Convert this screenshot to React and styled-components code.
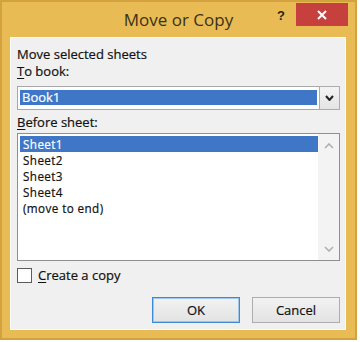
import React from 'react';
import styled, { createGlobalStyle } from 'styled-components';

const Global = createGlobalStyle`
  html, body { margin: 0; padding: 0; background: #ffffff; }
  body { font-family: "Open Sans", "Noto Sans", sans-serif; color: #111; }
`;

const Window = styled.div`
  box-sizing: border-box;
  width: 357px;
  height: 340px;
  background: #e9bb55;
  border: 2px solid #d3a13d;
  display: flex;
  flex-direction: column;
`;

const TitleBar = styled.div`
  height: 35px;
  flex: none;
  display: grid;
  grid-template-columns: 1fr auto 1fr;
  align-items: start;
`;

const Title = styled.div`
  grid-column: 2;
  font-size: 17px;
  line-height: 18px;
  color: #3a3216;
  padding-top: 9px;
`;

const Controls = styled.div`
  grid-column: 3;
  justify-self: end;
  display: flex;
  align-items: flex-start;
  gap: 11px;
  margin-right: 7px;
`;

const Help = styled.span`
  font-family: "Liberation Sans", Arial, sans-serif;
  font-weight: 700;
  font-size: 13px;
  line-height: 13px;
  color: #2a2410;
  margin-top: 7px;
`;

const CloseButton = styled.div`
  width: 52px;
  height: 23px;
  margin-top: 1px;
  background: #c6403e;
  display: flex;
  align-items: center;
  justify-content: center;
`;

const Panel = styled.div`
  flex: 1;
  margin: 0 9px 8px 8px;
  background: #f0f0f0;
  border: 1px solid #fbfbfb;
  padding: 8px 5px 0 6px;
  display: flex;
  flex-direction: column;
  font-size: 13px;
  line-height: 17px;
  -webkit-text-stroke: 0.2px currentColor;
`;

const Label = styled.div`
  margin-top: ${(p) => p.$mt || 0}px;
  color: #111;
`;

const Key = styled.span`
  text-decoration: underline;
  text-underline-offset: 2px;
`;

const Combo = styled.div`
  margin-top: 6px;
  height: 24px;
  box-sizing: border-box;
  border: 1px solid #a8a8a8;
  background: #fff;
  display: grid;
  grid-template-columns: 1fr 20px;
  column-gap: 2px;
`;

const ComboValue = styled.div`
  margin: 3px 0 4px 2px;
  background: #3f76c6;
  color: #fff;
  padding-left: 2px;
  font-size: 13px;
  line-height: 15px;
`;

const ComboButton = styled.div`
  margin: -1px -1px -1px 0;
  border: 1px solid #acacac;
  background: linear-gradient(#f4f4f4, #e4e4e4);
  display: flex;
  align-items: center;
  justify-content: center;
`;

const ListBox = styled.div`
  margin-top: 2px;
  height: 128px;
  box-sizing: border-box;
  border: 1px solid #8f8f8f;
  background: #fff;
  display: grid;
  grid-template-columns: 1fr 21px;
`;

const Items = styled.div`
  padding: 2px 0 0 2px;
  display: flex;
  flex-direction: column;
`;

const Item = styled.div`
  height: 16px;
  line-height: 16px;
  font-size: 11.7px;
  letter-spacing: 0.4px;
  padding-left: 3px;
  background: ${(p) => (p.$selected ? '#3f76c6' : 'transparent')};
  color: ${(p) => (p.$selected ? '#fff' : '#111')};
`;

const ScrollBar = styled.div`
  background: #f3f3f3;
  display: flex;
  flex-direction: column;
  justify-content: space-between;
  align-items: center;
  padding: 9px 0 8px;
`;

const CheckRow = styled.label`
  margin-top: 6px;
  height: 16px;
  display: flex;
  align-items: center;
  gap: 6px;
`;

const CheckBox = styled.span`
  width: 13px;
  height: 13px;
  border: 1px solid #5c5c5c;
  background: #fff;
  flex: none;
`;

const Buttons = styled.div`
  margin-top: 14px;
  display: flex;
  justify-content: flex-end;
  gap: 12px;
`;

const Button = styled.div`
  width: 88px;
  height: 26px;
  box-sizing: border-box;
  border: 1px solid ${(p) => (p.$default ? '#3c8ad6' : '#adadad')};
  box-shadow: ${(p) => (p.$default ? 'inset 0 0 0 1px #9fc6ec' : 'none')};
  background: linear-gradient(#f2f2f2, #e3e3e3);
  display: flex;
  align-items: center;
  justify-content: center;
  color: #111;
`;

const Chevron = ({ color = '#222', w = 8, h = 5, sw = 2, up = false }) => (
  <svg width={w + 2} height={h + 2} viewBox={`-1 -1 ${w + 2} ${h + 2}`}>
    <polyline
      points={up ? `0,${h} ${w / 2},0 ${w},${h}` : `0,0 ${w / 2},${h} ${w},0`}
      fill="none"
      stroke={color}
      strokeWidth={sw}
    />
  </svg>
);

export default function App() {
  const sheets = ['Sheet1', 'Sheet2', 'Sheet3', 'Sheet4', '(move to end)'];
  return (
    <>
      <Global />
      <Window>
        <TitleBar>
          <Title>Move or Copy</Title>
          <Controls>
            <Help>?</Help>
            <CloseButton>
              <svg width="10" height="10" viewBox="0 0 10 10">
                <path d="M1 1 L9 9 M9 1 L1 9" stroke="#fff" strokeWidth="2" />
              </svg>
            </CloseButton>
          </Controls>
        </TitleBar>
        <Panel>
          <Label>Move selected sheets</Label>
          <Label>
            <Key>T</Key>o book:
          </Label>
          <Combo>
            <ComboValue>Book1</ComboValue>
            <ComboButton>
              <Chevron color="#222" w={7} h={4} sw={2} />
            </ComboButton>
          </Combo>
          <Label $mt={4}>
            <Key>B</Key>efore sheet:
          </Label>
          <ListBox>
            <Items>
              {sheets.map((s, i) => (
                <Item key={s} $selected={i === 0}>
                  {s}
                </Item>
              ))}
            </Items>
            <ScrollBar>
              <Chevron color="#b0b0b0" w={8} h={4} sw={1.6} up />
              <Chevron color="#b0b0b0" w={8} h={4} sw={1.6} />
            </ScrollBar>
          </ListBox>
          <CheckRow>
            <CheckBox />
            <span>
              <Key>C</Key>reate a copy
            </span>
          </CheckRow>
          <Buttons>
            <Button $default>OK</Button>
            <Button>Cancel</Button>
          </Buttons>
        </Panel>
      </Window>
    </>
  );
}
